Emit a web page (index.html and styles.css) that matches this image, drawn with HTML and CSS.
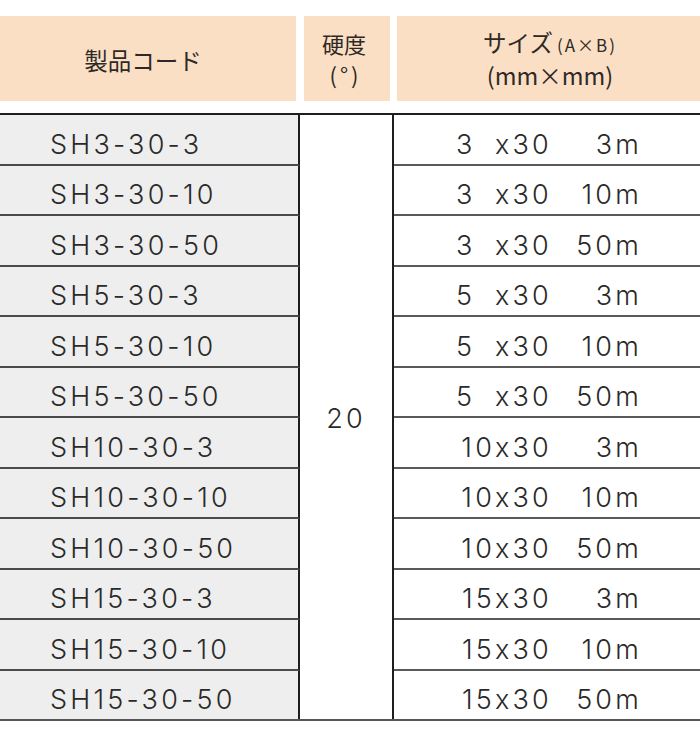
FILE: index.html
```html
<!DOCTYPE html>
<html lang="ja">
<head>
<meta charset="utf-8">
<title>製品一覧</title>
<link rel="stylesheet" href="styles.css">
</head>
<body>
<div class="page">
  <div class="head">
    <div class="hc hc-code">製品コード</div>
    <div class="hc hc-hard"><span class="hl">硬度</span><span class="hl deg">(°)</span></div>
    <div class="hc hc-size"><span class="hl"><span class="kana">サイズ</span><span class="sub">(A×B)</span></span><span class="hl">(mm×mm)</span></div>
  </div>
  <div class="body">
    <div class="code">SH3-30-3</div>
    <div class="hard">20</div>
    <div class="size"><span class="ab"><span>3</span><span>x30</span></span><span class="len">3m</span></div>
    <div class="code">SH3-30-10</div>
    <div class="size"><span class="ab"><span>3</span><span>x30</span></span><span class="len">10m</span></div>
    <div class="code">SH3-30-50</div>
    <div class="size"><span class="ab"><span>3</span><span>x30</span></span><span class="len">50m</span></div>
    <div class="code">SH5-30-3</div>
    <div class="size"><span class="ab"><span>5</span><span>x30</span></span><span class="len">3m</span></div>
    <div class="code">SH5-30-10</div>
    <div class="size"><span class="ab"><span>5</span><span>x30</span></span><span class="len">10m</span></div>
    <div class="code">SH5-30-50</div>
    <div class="size"><span class="ab"><span>5</span><span>x30</span></span><span class="len">50m</span></div>
    <div class="code">SH10-30-3</div>
    <div class="size"><span class="ab ab-end"><span>10x30</span></span><span class="len">3m</span></div>
    <div class="code">SH10-30-10</div>
    <div class="size"><span class="ab ab-end"><span>10x30</span></span><span class="len">10m</span></div>
    <div class="code">SH10-30-50</div>
    <div class="size"><span class="ab ab-end"><span>10x30</span></span><span class="len">50m</span></div>
    <div class="code">SH15-30-3</div>
    <div class="size"><span class="ab ab-end"><span>15x30</span></span><span class="len">3m</span></div>
    <div class="code">SH15-30-10</div>
    <div class="size"><span class="ab ab-end"><span>15x30</span></span><span class="len">10m</span></div>
    <div class="code last">SH15-30-50</div>
    <div class="size last"><span class="ab ab-end"><span>15x30</span></span><span class="len">50m</span></div>
  </div>
</div>
</body>
</html>
```

FILE: styles.css
```css
html, body {
  margin: 0;
  padding: 0;
  background: #ffffff;
}

.page {
  width: 700px;
  padding-top: 16px;
  font-family: "Inter", "Noto Sans", "Noto Sans CJK JP", sans-serif;
  color: #2a2a2a;
}

.head {
  display: flex;
  height: 85px;
}

.hc {
  background: #fadfc5;
  display: flex;
  flex-direction: column;
  align-items: center;
  justify-content: center;
  font-family: "Noto Sans CJK JP", sans-serif;
  font-size: 22px;
  font-weight: 400;
  color: #2e2925;
  box-sizing: border-box;
}

.hc-code {
  width: 296px;
  font-size: 23.5px;
  padding: 2px 10px 0 0;
}

.hc-hard {
  width: 86px;
  margin-left: 8px;
  padding-right: 6px;
}

.hc-size {
  flex: 1;
  margin-left: 7px;
  padding-left: 3px;
  font-size: 23.5px;
}

.hl {
  display: block;
  line-height: 31px;
}

.deg {
  letter-spacing: 3px;
  padding-left: 3px;
}

.sub {
  font-size: 17px;
  letter-spacing: 2px;
  margin-left: 4px;
}

.body {
  margin-top: 12px;
  border-top: 2px solid #1e1e1e;
  border-bottom: 2px solid #555555;
  display: grid;
  grid-template-columns: 300px 94px 1fr;
  grid-template-rows: repeat(11, 50.5px) 48.5px;
  font-size: 27px;
  font-weight: 300;
  letter-spacing: 3.2px;
}

.code {
  grid-column: 1;
  background: #eeeeee;
  border-right: 2px solid #1e1e1e;
  border-bottom: 2px solid #4a4a4a;
  display: flex;
  align-items: center;
  padding: 10px 0 0 50px;
  box-sizing: border-box;
}

.hard {
  grid-column: 2;
  grid-row: 1 / 13;
  border-right: 2px solid #1e1e1e;
  display: flex;
  align-items: center;
  justify-content: center;
  padding-top: 2px;
  box-sizing: border-box;
}

.size {
  grid-column: 3;
  border-bottom: 2px solid #5a5a5a;
  display: flex;
  align-items: center;
  padding: 10px 0 0 62px;
  box-sizing: border-box;
}

.last {
  border-bottom: none;
}

.ab {
  width: 96px;
  display: flex;
  justify-content: space-between;
}

.ab-end {
  justify-content: flex-end;
}

.len {
  width: 90px;
  text-align: right;
}
```
